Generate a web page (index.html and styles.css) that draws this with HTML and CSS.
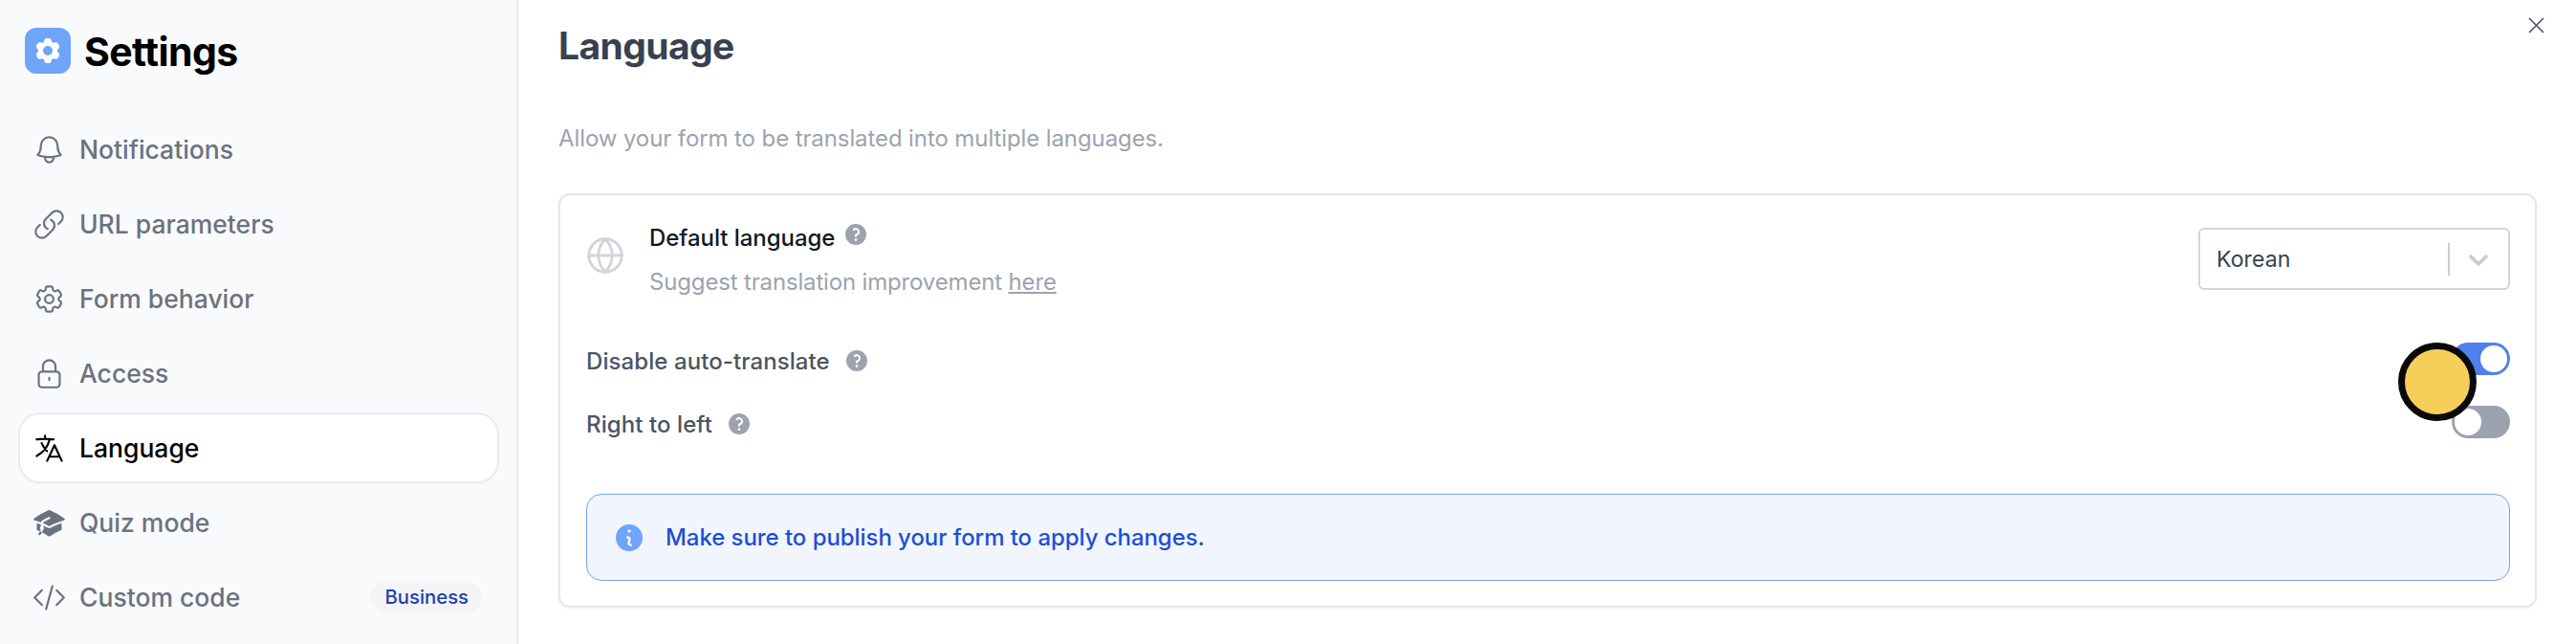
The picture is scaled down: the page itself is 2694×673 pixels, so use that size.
FILE: index.html
```html
<!DOCTYPE html>
<html lang="en">
<head>
<meta charset="utf-8">
<title>Settings</title>
<link rel="stylesheet" href="styles.css">
</head>
<body>
<div class="app">
  <aside class="sidebar">
    <header class="brand">
      <span class="brand-icon">
        <svg viewBox="0 0 24 24" fill="#fff"><path fill-rule="evenodd" d="M11.078 2.25c-.917 0-1.699.663-1.85 1.567L9.05 4.889c-.02.12-.115.26-.297.348a7.493 7.493 0 00-.986.57c-.166.115-.334.126-.45.083L6.3 5.508a1.875 1.875 0 00-2.282.819l-.922 1.597a1.875 1.875 0 00.432 2.385l.84.692c.095.078.17.229.154.43a7.598 7.598 0 000 1.139c.015.2-.059.352-.153.43l-.841.692a1.875 1.875 0 00-.432 2.385l.922 1.597a1.875 1.875 0 002.282.818l1.019-.382c.115-.043.283-.031.45.082.312.214.641.405.985.57.182.088.277.228.297.35l.178 1.071c.151.904.933 1.567 1.85 1.567h1.844c.916 0 1.699-.663 1.85-1.567l.178-1.072c.02-.12.114-.26.297-.349.344-.165.673-.356.985-.57.167-.114.335-.125.45-.082l1.02.382a1.875 1.875 0 002.28-.819l.923-1.597a1.875 1.875 0 00-.432-2.385l-.84-.692c-.095-.078-.17-.229-.154-.43a7.614 7.614 0 000-1.139c-.016-.2.059-.352.153-.43l.84-.692c.708-.582.891-1.59.433-2.385l-.922-1.597a1.875 1.875 0 00-2.282-.818l-1.02.382c-.114.043-.282.031-.449-.083a7.49 7.49 0 00-.985-.57c-.183-.087-.277-.227-.297-.348l-.179-1.072a1.875 1.875 0 00-1.85-1.567h-1.843zM12 15.75a3.75 3.75 0 100-7.5 3.75 3.75 0 000 7.5z"/></svg>
      </span>
      <span class="brand-title">Settings</span>
    </header>
    <nav class="nav">
      <a class="nav-item">
        <svg class="nav-icon" viewBox="0 0 24 24"><path d="M14.857 17.082a23.848 23.848 0 005.454-1.31A8.967 8.967 0 0118 9.75v-.7V9A6 6 0 006 9v.75a8.967 8.967 0 01-2.312 6.022c1.733.64 3.56 1.085 5.455 1.31m5.714 0a24.255 24.255 0 01-5.714 0m5.714 0a3 3 0 11-5.714 0"/></svg>
        <span>Notifications</span>
      </a>
      <a class="nav-item">
        <svg class="nav-icon" viewBox="0 0 24 24"><path d="M13.19 8.688a4.5 4.5 0 011.242 7.244l-4.5 4.5a4.5 4.5 0 01-6.364-6.364l1.757-1.757m13.35-.622l1.757-1.757a4.5 4.5 0 00-6.364-6.364l-4.5 4.5a4.5 4.5 0 001.242 7.244"/></svg>
        <span>URL parameters</span>
      </a>
      <a class="nav-item">
        <svg class="nav-icon" viewBox="0 0 24 24"><path d="M9.594 3.94c.09-.542.56-.94 1.11-.94h2.593c.55 0 1.02.398 1.11.94l.213 1.281c.063.374.313.686.645.87.074.04.147.083.22.127.324.196.72.257 1.075.124l1.217-.456a1.125 1.125 0 011.37.49l1.296 2.247a1.125 1.125 0 01-.26 1.431l-1.003.827c-.293.24-.438.613-.431.992a6.759 6.759 0 010 .255c-.007.378.138.75.43.99l1.005.828c.424.35.534.954.26 1.43l-1.298 2.247a1.125 1.125 0 01-1.369.491l-1.217-.456c-.355-.133-.75-.072-1.076.124a6.57 6.57 0 01-.22.128c-.331.183-.581.495-.644.869l-.213 1.28c-.09.543-.56.941-1.11.941h-2.594c-.55 0-1.02-.398-1.11-.94l-.213-1.281c-.062-.374-.312-.686-.644-.87a6.52 6.52 0 01-.22-.127c-.325-.196-.72-.257-1.076-.124l-1.217.456a1.125 1.125 0 01-1.369-.49l-1.297-2.247a1.125 1.125 0 01.26-1.431l1.004-.827c.292-.24.437-.613.43-.992a6.932 6.932 0 010-.255c.007-.378-.138-.75-.43-.99l-1.004-.828a1.125 1.125 0 01-.26-1.43l1.297-2.247a1.125 1.125 0 011.37-.491l1.216.456c.356.133.751.072 1.076-.124.072-.044.146-.087.22-.128.332-.183.582-.495.644-.869l.214-1.281z"/><path d="M15 12a3 3 0 11-6 0 3 3 0 016 0z"/></svg>
        <span>Form behavior</span>
      </a>
      <a class="nav-item">
        <svg class="nav-icon" viewBox="0 0 24 24"><path d="M16.5 10.5V6.75a4.5 4.5 0 10-9 0v3.75m-.75 11.25h10.5a2.25 2.25 0 002.25-2.25v-6.75a2.25 2.25 0 00-2.25-2.25H6.75a2.25 2.25 0 00-2.25 2.25v6.75a2.25 2.25 0 002.25 2.25z"/><path d="M12 15v1.5"/></svg>
        <span>Access</span>
      </a>
      <a class="nav-item is-active">
        <svg class="nav-icon" viewBox="0 0 24 24"><path d="M10.5 21l5.25-11.25L21 21m-9-3h7.5M3 5.621a48.474 48.474 0 016-.371m0 0c1.12 0 2.233.038 3.334.114M9 5.25V3m3.334 2.364C11.176 10.658 7.69 15.08 3 17.502m9.334-12.138c.896.061 1.785.147 2.666.257m-4.589 8.495a18.023 18.023 0 01-3.827-5.802"/></svg>
        <span>Language</span>
      </a>
      <a class="nav-item">
        <svg class="nav-icon nav-icon-solid" viewBox="0 0 24 24"><path d="M11.7 2.805a.75.75 0 01.6 0A60.65 60.65 0 0122.83 8.72a.75.75 0 01-.231 1.337 49.949 49.949 0 00-9.902 3.912l-.003.002-.34.18a.75.75 0 01-.707 0A50.009 50.009 0 007.5 12.174v-.224c0-.131.067-.248.172-.311a54.614 54.614 0 014.653-2.52.75.75 0 00-.65-1.352 56.129 56.129 0 00-4.78 2.589 1.858 1.858 0 00-.859 1.228 49.803 49.803 0 00-4.634-1.527.75.75 0 01-.231-1.337A60.653 60.653 0 0111.7 2.805z"/><path d="M13.06 15.473a48.45 48.45 0 017.666-3.282c.134 1.414.22 2.843.255 4.285a.75.75 0 01-.46.71 47.878 47.878 0 00-8.105 4.342.75.75 0 01-.832 0 47.877 47.877 0 00-8.104-4.342.75.75 0 01-.461-.71c.035-1.442.121-2.87.255-4.286A48.4 48.4 0 016 13.18v1.27a1.5 1.5 0 00-.14 2.508c-.09.38-.222.753-.397 1.11.452.213.901.434 1.346.661a6.729 6.729 0 00.551-1.608 1.5 1.5 0 00.14-2.67v-.645a48.549 48.549 0 013.44 1.668 2.25 2.25 0 002.12 0z"/><path d="M4.462 19.462c.42-.419.753-.89 1-1.394.453.213.902.434 1.347.661a6.743 6.743 0 01-1.286 1.794.75.75 0 11-1.06-1.06z"/></svg>
        <span>Quiz mode</span>
      </a>
      <a class="nav-item">
        <svg class="nav-icon" viewBox="0 0 24 24"><path d="M17.25 6.75L22.5 12l-5.25 5.25m-10.5 0L1.5 12l5.25-5.25m7.5-3L9.75 20.25"/></svg>
        <span>Custom code</span>
        <span class="badge">Business</span>
      </a>
    </nav>
  </aside>

  <main class="main">
    <h1 class="page-title">Language</h1>
    <p class="page-desc">Allow your form to be translated into multiple languages.</p>

    <section class="card">
      <div class="lang-row">
        <svg class="globe" viewBox="0 0 24 24"><path d="M12 21a9 9 0 100-18 9 9 0 000 18z"/><path d="M12 3c2.400 2.600 3.750 5.700 3.750 9s-1.350 6.400-3.750 9c-2.400-2.600-3.750-5.700-3.750-9S9.600 5.600 12 3z"/><path d="M3 12h18"/></svg>
        <div class="lang-text">
          <div class="lang-title">
            <span>Default language</span>
            <svg class="help" viewBox="2 2 16 16"><path fill-rule="evenodd" d="M18 10a8 8 0 11-16 0 8 8 0 0116 0zM8.940 6.940a.75.75 0 11-1.061-1.061 3 3 0 112.871 5.026v.345a.75.75 0 01-1.500 0v-.5c0-.72.57-1.172 1.081-1.287A1.500 1.500 0 108.940 6.940zM10 15a1 1 0 100-2 1 1 0 000 2z"/></svg>
          </div>
          <div class="lang-hint">Suggest translation improvement <a class="hint-link">here</a></div>
        </div>
        <div class="select">
          <span class="select-value">Korean</span>
          <span class="select-sep"></span>
          <svg class="select-chevron" viewBox="0 0 20 20"><path d="M4.516 7.548c.436-.446 1.043-.481 1.576 0L10 11.295l3.908-3.747c.533-.481 1.141-.446 1.574 0 .436.445.408 1.197 0 1.615-.406.418-4.695 4.502-4.695 4.502a1.095 1.095 0 01-1.576 0S4.924 9.581 4.516 9.163s-.436-1.17 0-1.615z"/></svg>
        </div>
      </div>

      <div class="toggle-row">
        <span class="toggle-label">Disable auto-translate</span>
        <svg class="help help-label" viewBox="2 2 16 16"><path fill-rule="evenodd" d="M18 10a8 8 0 11-16 0 8 8 0 0116 0zM8.940 6.940a.75.75 0 11-1.061-1.061 3 3 0 112.871 5.026v.345a.75.75 0 01-1.500 0v-.5c0-.72.57-1.172 1.081-1.287A1.500 1.500 0 108.940 6.940zM10 15a1 1 0 100-2 1 1 0 000 2z"/></svg>
        <span class="toggle is-on"><span class="thumb"></span></span>
      </div>
      <div class="toggle-row toggle-row-second">
        <span class="toggle-label">Right to left</span>
        <svg class="help help-label" viewBox="2 2 16 16"><path fill-rule="evenodd" d="M18 10a8 8 0 11-16 0 8 8 0 0116 0zM8.940 6.940a.75.75 0 11-1.061-1.061 3 3 0 112.871 5.026v.345a.75.75 0 01-1.500 0v-.5c0-.72.57-1.172 1.081-1.287A1.500 1.500 0 108.940 6.940zM10 15a1 1 0 100-2 1 1 0 000 2z"/></svg>
        <span class="toggle"><span class="thumb"></span></span>
      </div>

      <div class="notice">
        <svg class="notice-icon" viewBox="2 2 16 16"><path fill-rule="evenodd" d="M18 10a8 8 0 11-16 0 8 8 0 0116 0zm-7-4a1 1 0 11-2 0 1 1 0 012 0zM9 9a.75.75 0 000 1.500h.253a.25.25 0 01.244.304l-.459 2.066A1.750 1.750 0 0010.747 15H11a.75.75 0 000-1.500h-.253a.25.25 0 01-.244-.304l.459-2.066A1.750 1.750 0 009.253 9H9z"/></svg>
        <span>Make sure to publish your form to apply changes.</span>
      </div>
    </section>

    <button class="close" aria-label="Close">
      <svg viewBox="0 0 17 17"><path d="M1 1l15 15M16 1L1 16"/></svg>
    </button>
  </main>
</div>
<div class="cursor"></div>
</body>
</html>
```
FILE: styles.css
```css
* { box-sizing: border-box; }
html, body { margin: 0; height: 100%; }
body {
  background: #fff;
  font-family: Inter, "Noto Sans", sans-serif;
  overflow: hidden;
}
.app { display: flex; height: 673px; }

.sidebar {
  flex: 0 0 542px;
  width: 542px;
  background: #f9fafc;
  border-right: 2px solid #e5e7eb;
  padding: 29px 20px 0 21px;
}
.brand { display: flex; align-items: center; gap: 14px; padding-left: 5px; height: 48px; }
.brand-icon {
  width: 48px; height: 48px;
  background: #6ea5f8;
  border-radius: 12px;
  display: flex; align-items: center; justify-content: center;
}
.brand-icon svg { width: 32px; height: 32px; }
.brand-title { font-size: 41px; font-weight: 700; color: #000; letter-spacing: -0.6px; margin-top: 2px; }

.nav { display: flex; flex-direction: column; gap: 8px; margin-top: 44px; }
.nav-item {
  display: flex; align-items: center; gap: 14px;
  height: 70px;
  padding: 0 16px 0 13px;
  border-radius: 21px;
  font-size: 26.5px; font-weight: 500;
  color: #6b7280;
}
.nav-icon { width: 35px; height: 35px; fill: none; stroke: currentColor; stroke-width: 1.5; stroke-linecap: round; stroke-linejoin: round; flex: none; }
.nav-icon-solid { fill: currentColor; stroke: none; }
.is-active {
  background: #fff;
  color: #000;
  box-shadow: 0 0 0 2px #e9ebef, 0 2px 4px rgba(0,0,0,.06);
}
.badge {
  margin-left: auto;
  font-size: 20.3px;
  color: #1e40af;
  background: #f3f4f6;
  border-radius: 16px;
  height: 32px;
  line-height: 32px;
  padding: 0 14px;
}

.main { flex: 1; position: relative; padding: 26px 41px 0 42px; min-width: 0; }
.page-title { margin: 0; font-size: 39px; line-height: 44px; font-weight: 700; color: #374151; letter-spacing: -0.6px; }
.page-desc { margin: 57px 0 0; font-size: 24px; line-height: 36px; color: #9ca3af; letter-spacing: -0.1px; }

.card {
  margin-top: 39px;
  height: 433px;
  border: 2px solid #e5e7eb;
  border-radius: 12px;
  padding: 27px 26px 26px 27px;
  box-shadow: 0 1px 3px rgba(0,0,0,.05);
}
.lang-row { display: flex; align-items: center; height: 82px; }
.globe { width: 46px; height: 46px; fill: none; stroke: #d1d5db; stroke-width: 1.5; stroke-linecap: round; stroke-linejoin: round; margin: -10px 23px 0 -3px; flex: none; }
.lang-text { flex: 1; display: flex; flex-direction: column; gap: 10px; }
.lang-title { display: flex; align-items: center; gap: 11px; font-size: 24px; line-height: 36px; font-weight: 500; color: #111827; letter-spacing: -0.05px; }
.lang-hint { font-size: 24px; line-height: 36px; color: #9ca3af; letter-spacing: -0.16px; }
.hint-link { text-decoration: underline; }
.help { width: 22px; height: 22px; fill: #9ca3af; flex: none; margin-top: -8px; }
.select {
  flex: 0 0 326px;
  height: 65px;
  margin-top: -3px;
  border: 2px solid #d1d5db;
  border-radius: 6px;
  display: flex; align-items: center;
  padding: 0 14px 0 17px;
}
.select-value { flex: 1; font-size: 23.2px; color: #374151; margin-top: 1px; }
.select-sep { width: 2px; height: 34px; background: #ccc; margin-right: 13px; }
.select-chevron { width: 34px; height: 34px; fill: #ccc; }

.toggle-row { display: flex; align-items: center; height: 34px; margin-top: 45px; }
.toggle-row-second { margin-top: 32px; }
.toggle-label { font-size: 24px; font-weight: 500; line-height: 36px; color: #4b5563; padding-top: 5px; letter-spacing: .08px; }
.help-label { margin: 4px 0 0 17px; }
.toggle {
  margin-left: auto;
  width: 61px; height: 34px;
  border-radius: 17px;
  background: #9ca3af;
  padding: 3px;
  display: flex;
}
.toggle.is-on { background: #4f80ee; justify-content: flex-end; }
.thumb { width: 28px; height: 28px; border-radius: 50%; background: #fff; }

.notice {
  margin-top: 58px;
  height: 91px;
  border: 1.5px solid #6ea5f8;
  border-radius: 16px;
  background: #f1f6fe;
  display: flex; align-items: center; gap: 24px;
  padding-left: 30px;
  font-size: 24px; font-weight: 500;
  color: #1d4ed8;
  letter-spacing: -0.06px;
}
.notice-icon { width: 28px; height: 28px; fill: #6ea5f8; flex: none; }

.close {
  position: absolute; top: 18px; right: 33px;
  width: 17px; height: 17px;
  padding: 0; border: 0; background: none;
}
.close svg { display: block; width: 17px; height: 17px; fill: none; stroke: #4b5563; stroke-width: 1.6; }

.cursor {
  position: absolute; left: 2508px; top: 358px;
  width: 82px; height: 82px;
  border-radius: 50%;
  background: #f6ce5a;
  border: 7px solid #0a0a0a;
}
```
